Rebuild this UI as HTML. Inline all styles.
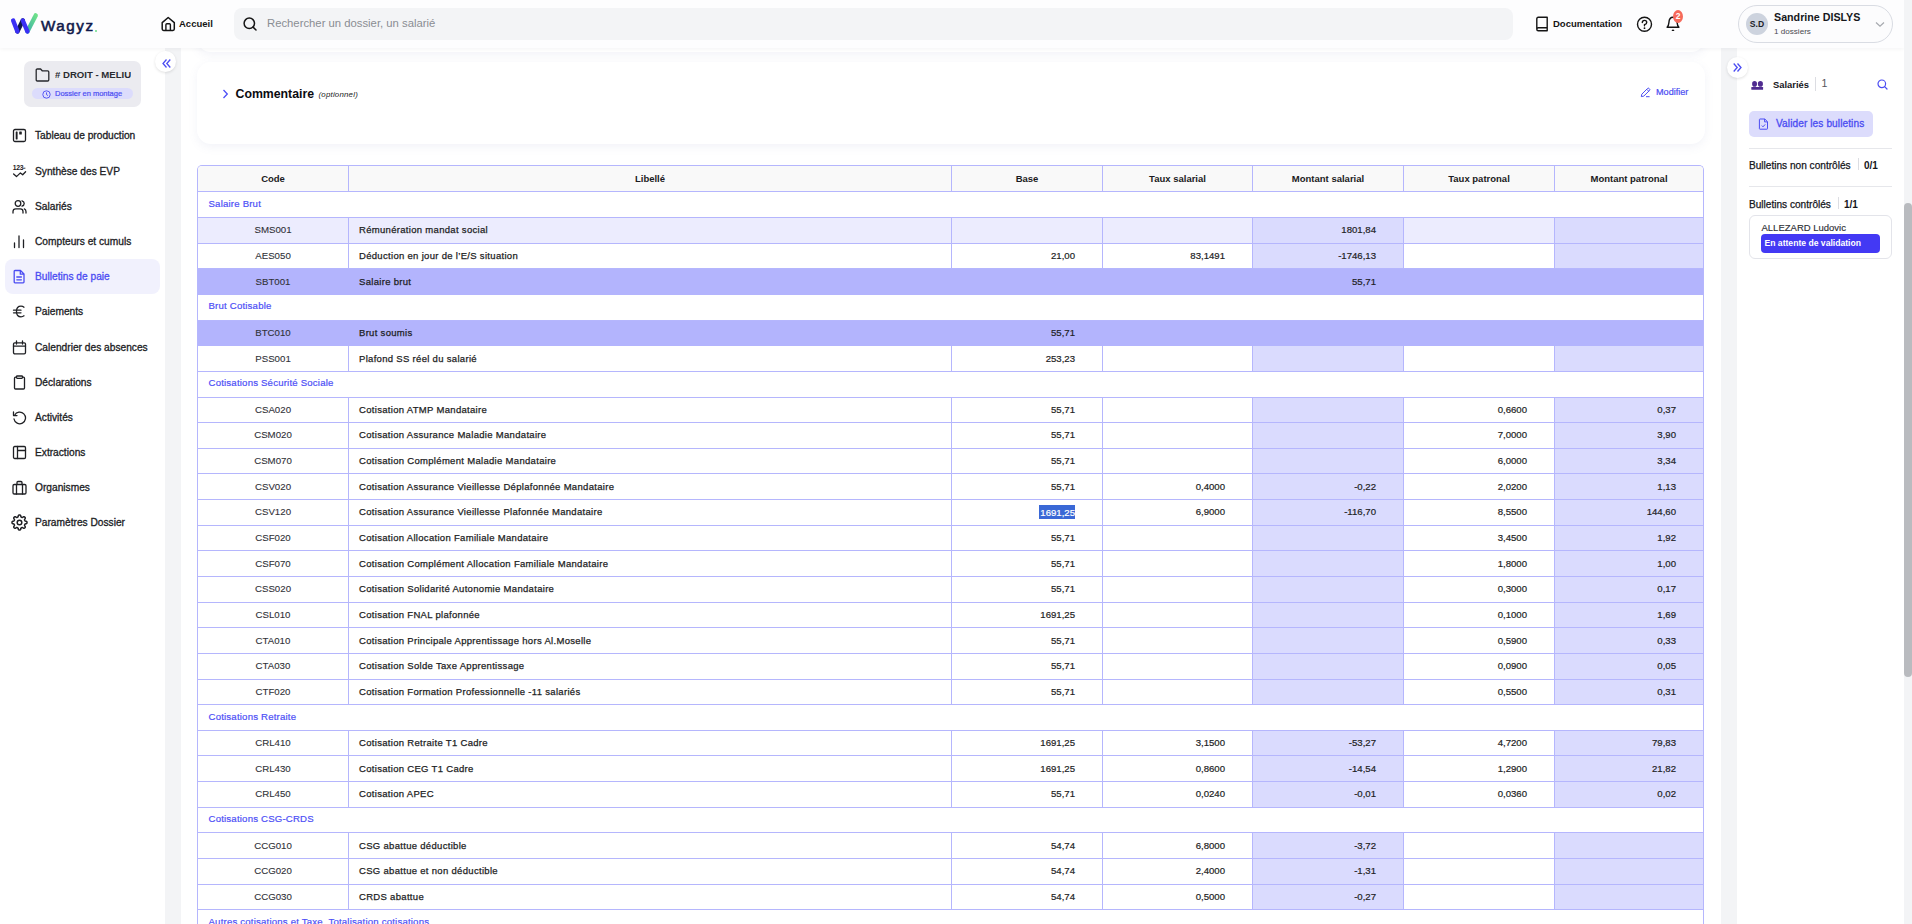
<!DOCTYPE html>
<html lang="fr">
<head>
<meta charset="utf-8">
<title>Wagyz - Bulletins de paie</title>
<style>
*{box-sizing:border-box;margin:0;padding:0}
html,body{width:1912px;height:924px;overflow:hidden}
body{position:relative;background:#fff;font-family:"Liberation Sans",sans-serif;color:#1f2330}
.abs{position:absolute}
svg{display:block}
/* header */
#hdr{position:absolute;left:0;top:0;width:1904px;height:48px;background:#fdfdfe;box-shadow:0 1px 4px rgba(20,20,40,.05);z-index:5}
#track{position:absolute;left:1904px;top:0;width:8px;height:924px;background:#f3f4f6;z-index:6}
#thumb{position:absolute;left:1904px;top:203px;width:8px;height:474px;background:#b9bbbf;border-radius:4px;z-index:7}
.logo-txt{position:absolute;left:41px;top:17px;font-size:15.2px;letter-spacing:1.55px;color:#10194a;-webkit-text-stroke:0.55px #10194a}
.search{position:absolute;left:234px;top:8px;width:1279px;height:32px;background:#f3f4f6;border-radius:8px}
.search span{position:absolute;left:33px;top:9px;font-size:11.3px;color:#8a8d93}
.hb{font-weight:bold;font-size:9.5px;color:#151515}
/* sidebar */
#side{position:absolute;left:0;top:48px;width:165px;height:876px;background:#fff}
#gut{position:absolute;left:165px;top:48px;width:16px;height:876px;background:#f3f4f6}
.folder{position:absolute;left:24px;top:61px;width:117px;height:46px;background:#ebebf0;border-radius:7px;overflow:hidden}
.folder .t{position:absolute;left:31px;top:8px;font-size:9.6px;font-weight:bold;color:#2a2b30;white-space:nowrap;width:76px;overflow:hidden}
.badge{position:absolute;left:8px;top:27px;width:101px;height:11px;border-radius:6px;background:#dcdcfc}
.badge span{position:absolute;left:23px;top:1px;font-size:7.5px;color:#4b4cf2;white-space:nowrap;-webkit-text-stroke:0.2px #4b4cf2}
.nav{position:absolute;left:0;width:165px;height:20px}
.nav span{position:absolute;left:35px;top:5.7px;font-size:10.2px;color:#202124;white-space:nowrap;-webkit-text-stroke:0.3px #202124}
.nav svg{position:absolute;left:12px;top:3.5px}
.nav.act span{color:#4b4cf2;-webkit-text-stroke:0.3px #4b4cf2}
.actbg{position:absolute;left:5px;top:259px;width:155px;height:35px;border-radius:8px;background:#f1f1fd}
.circ{position:absolute;width:21px;height:21px;border-radius:50%;background:#fff;box-shadow:0 1px 3px rgba(0,0,0,.12);z-index:8}
/* content */
#card{position:absolute;left:197px;top:62px;width:1508px;height:82px;background:#fff;border-radius:14px;box-shadow:0 3px 10px rgba(110,120,180,.09)}
#prevcard{position:absolute;left:197px;top:10px;width:1508px;height:42px;background:#fff;border-radius:14px;box-shadow:0 3px 10px rgba(110,120,180,.09)}
/* table */
#tbl{position:absolute;left:197px;top:165px;width:1506px;border-collapse:separate;border-spacing:0;table-layout:fixed;border:1px solid #b5b6fd;border-bottom:none;border-radius:5px 5px 0 0;background:#fff;font-size:9.5px}
#tbl th{height:26.4px;background:#f9f9f9;font-weight:bold;color:#1b1b22;text-align:center;border-bottom:1px solid #b5b6fd;border-right:1px solid #b5b6fd;font-size:9.5px}
#tbl th:last-child{border-right:none}
#tbl th:first-child{border-top-left-radius:4px}
#tbl th:last-child{border-top-right-radius:4px}
#tbl td{height:25.65px;border-bottom:1px solid #b5b6fd;border-right:1px solid #b5b6fd;white-space:nowrap;overflow:hidden;padding:0 0 1px 0}
#tbl td:last-child{border-right:none}
#tbl tr.sec td{color:#4d4ff6;padding-left:10.5px;padding-bottom:3px;font-size:9.6px;letter-spacing:0.2px;background:#fff;-webkit-text-stroke:0.2px #4d4ff6}
#tbl td.c{text-align:center;color:#303137;font-size:9.7px;-webkit-text-stroke:0.1px #303137}
#tbl td.l{padding-left:10px;color:#1d1e24;font-size:9.5px;letter-spacing:0.31px;-webkit-text-stroke:0.25px #1d1e24}
#tbl td.n{text-align:right;padding-right:27px;color:#1d1e24;font-size:9.6px;-webkit-text-stroke:0.2px #1d1e24}
#tbl td.m{background:#dadbfe}
#tbl tr.hl td{background:#ececfe}
#tbl tr.hl td.m{background:#dadbfe}
#tbl tr.tot td{background:#b3b4fd;border-color:#b3b4fd}
.sel{background:#3a68d6;color:#fff;-webkit-text-stroke:0.2px #fff;padding:1.5px 0 1.5px 1px}
/* right panel */
#rgut{position:absolute;left:1721px;top:48px;width:16px;height:876px;background:#f3f4f6}
#rpanel{position:absolute;left:1737px;top:48px;width:167px;height:876px;background:#fff}
.rp-t{position:absolute;white-space:nowrap}
</style>
</head>
<body>
<div id="track"></div>
<div id="thumb"></div>

<!-- HEADER -->
<div id="hdr">
  <svg class="abs" style="left:8px;top:9.3px" width="34" height="28" viewBox="0 0 34 28">
    <defs><linearGradient id="gg" x1="0" y1="1" x2="1" y2="0"><stop offset="0" stop-color="#3bb0a8"/><stop offset="1" stop-color="#6de08a"/></linearGradient></defs>
    <path d="M9.4 22.4 L14.8 11.5" stroke="#0d1850" stroke-width="4.4" stroke-linecap="round"/>
    <path d="M19.4 22.4 L27.7 6.4" stroke="url(#gg)" stroke-width="4.4" stroke-linecap="round"/>
    <path d="M5.15 11.5 L9.4 22.4" stroke="#3a2ff5" stroke-width="4.4" stroke-linecap="round"/>
    <path d="M14.8 11.5 L19.4 22.4" stroke="#3a2ff5" stroke-width="4.4" stroke-linecap="round"/>
  </svg>
  <div class="logo-txt">Wagyz</div>
  <div class="abs" style="left:95px;top:30px;width:2px;height:2px;background:#6ddc8a;border-radius:1px"></div>

  <svg class="abs" style="left:160px;top:16px" width="16" height="16" viewBox="0 0 16 16"><path d="M2.2 6.6 L8.2 1.5 L14.3 6.6 V13 Q14.3 14.4 12.9 14.4 H3.6 Q2.2 14.4 2.2 13 Z" fill="none" stroke="#151515" stroke-width="1.5" stroke-linejoin="round"/><path d="M5.9 14.2 V8.7 Q5.9 7.7 6.9 7.7 H9.4 Q10.4 7.7 10.4 8.7 V14.2" fill="none" stroke="#151515" stroke-width="1.4"/></svg>
  <div class="abs hb" style="left:179px;top:18px">Accueil</div>

  <div class="search">
    <svg class="abs" style="left:9px;top:9px" width="15" height="15" viewBox="0 0 15 15"><circle cx="6.3" cy="6.3" r="5.2" fill="none" stroke="#151515" stroke-width="1.5"/><path d="M10.1 10.1 L13 13" stroke="#151515" stroke-width="1.5" stroke-linecap="round"/></svg>
    <span>Rechercher un dossier, un salarié</span>
  </div>

  <svg class="abs" style="left:1535px;top:16px" width="14" height="16" viewBox="0 0 14 16"><path d="M1.8 13.3 V2.8 Q1.8 1.3 3.3 1.3 H12.2 V14.8 H3.3 Q1.8 14.8 1.8 13.3 Q1.8 11.8 3.3 11.8 H12.2" fill="none" stroke="#151515" stroke-width="1.4" stroke-linejoin="round"/></svg>
  <div class="abs hb" style="left:1553px;top:18px">Documentation</div>
  <svg class="abs" style="left:1635.5px;top:15.8px" width="17" height="17" viewBox="0 0 17 17"><circle cx="8.5" cy="8.3" r="7" fill="none" stroke="#151515" stroke-width="1.4"/><path d="M6.3 6.6 Q6.3 4.4 8.5 4.4 Q10.7 4.4 10.7 6.4 Q10.7 7.8 8.5 8.7 V9.8" fill="none" stroke="#151515" stroke-width="1.4" stroke-linecap="round"/><circle cx="8.5" cy="12.2" r="0.9" fill="#151515"/></svg>
  <svg class="abs" style="left:1664px;top:16px" width="18" height="18" viewBox="0 0 18 18"><path d="M3.1 11.2 Q4.7 9.6 4.9 6.6 Q5.2 1.3 9 1.3 Q12.8 1.3 13.1 6.6 Q13.3 9.6 14.9 11.2 Z" fill="none" stroke="#151515" stroke-width="1.4" stroke-linejoin="round"/><path d="M7.9 13.9 Q9 14.7 10.1 13.9" fill="none" stroke="#151515" stroke-width="1.2"/></svg>
  <div class="abs" style="left:1673px;top:10px;width:10px;height:13px;border-radius:50%;background:#f66a5b;color:#fff;font-size:8.5px;font-weight:bold;text-align:center;line-height:13px">2</div>

  <div class="abs" style="left:1738px;top:5px;width:155px;height:38px;border:1px solid #d9dce3;border-radius:19px;background:#fcfcfd">
    <div class="abs" style="left:7px;top:7px;width:22px;height:22px;border-radius:50%;background:#cdd3de;font-size:8.6px;font-weight:bold;color:#1e2128;text-align:center;line-height:22px">S.D</div>
    <div class="abs" style="left:35px;top:5px;font-size:10.7px;font-weight:bold;color:#16171c;white-space:nowrap">Sandrine DISLYS</div>
    <div class="abs" style="left:35px;top:20.5px;font-size:8.1px;color:#4a4b50;white-space:nowrap">1 dossiers</div>
    <svg class="abs" style="left:136px;top:15px" width="10" height="7" viewBox="0 0 10 7"><path d="M1 1.5 L5 5.2 L9 1.5" fill="none" stroke="#a6a9ae" stroke-width="1.2"/></svg>
  </div>
</div>

<!-- SIDEBAR -->
<div id="side">
</div>
<div id="gut"></div>
<div class="abs" style="left:0;top:0;width:1px;height:1px"></div>
<div class="folder">
  <svg class="abs" style="left:11px;top:7px" width="15" height="14" viewBox="0 0 15 14"><path d="M1.2 2.2 Q1.2 1 2.4 1 H5.6 L7.2 2.8 H12.6 Q13.8 2.8 13.8 4 V11.8 Q13.8 13 12.6 13 H2.4 Q1.2 13 1.2 11.8 Z" fill="none" stroke="#26272c" stroke-width="1.3" stroke-linejoin="round"/></svg>
  <div class="t"># DROIT - MELIUS</div>
  <div class="badge">
    <svg class="abs" style="left:10px;top:1.5px" width="9" height="9" viewBox="0 0 9 9"><circle cx="4.5" cy="4.5" r="3.7" fill="none" stroke="#4b4cf2" stroke-width="0.9"/><path d="M4.5 2.4 V4.6 L6 5.6" fill="none" stroke="#4b4cf2" stroke-width="0.9"/></svg>
    <span>Dossier en montage</span>
  </div>
</div>
<div class="circ" style="left:155px;top:51px">
  <svg class="abs" style="left:6px;top:6.5px" width="11" height="11" viewBox="0 0 11 11"><path d="M5.5 1.5 L2 5.5 L5.5 9.5 M9.3 1.5 L5.8 5.5 L9.3 9.5" fill="none" stroke="#4b4cf2" stroke-width="1.3"/></svg>
</div>

<div class="actbg"></div>
<div class="nav" style="top:124px"><svg width="15" height="15" viewBox="0 0 15 15"><rect x="1.5" y="1.5" width="12" height="12" rx="1.5" fill="none" stroke="#1f2024" stroke-width="1.3" stroke-linecap="round" stroke-linejoin="round"/><rect x="3.7" y="3.6" width="1.9" height="7.9" rx="0.4" fill="#1f2024"/><rect x="7.2" y="3.6" width="2.6" height="2.8" rx="0.5" fill="#1f2024"/></svg><span>Tableau de production</span></div>
<div class="nav" style="top:160px"><svg width="15" height="15" viewBox="0 0 15 15"><text x="0.8" y="5.9" font-size="6.8" letter-spacing="-0.35" font-family="Liberation Sans" font-weight="bold" fill="#1f2024">123</text><path d="M11.2 4.2 H13.4" stroke="#1f2024" stroke-width="0.9"/><path d="M1.6 10 L4.5 12.6 L8.4 8.9 L10.7 10.8 L13.6 7.7" fill="none" stroke="#1f2024" stroke-width="1.3" stroke-linecap="round" stroke-linejoin="round"/></svg><span>Synthèse des EVP</span></div>
<div class="nav" style="top:195px"><svg width="15" height="15" viewBox="0 0 15 15"><circle cx="6" cy="4.5" r="2.8" fill="none" stroke="#1f2024" stroke-width="1.3" stroke-linecap="round" stroke-linejoin="round"/><path d="M1 14 V12.5 Q1 9.8 3.8 9.8 H8.2 Q11 9.8 11 12.5 V14" fill="none" stroke="#1f2024" stroke-width="1.3" stroke-linecap="round" stroke-linejoin="round"/><path d="M10 1.8 Q12.2 2.6 12.2 4.5 Q12.2 6.4 10 7.2 M12.3 9.9 Q14 10.6 14 12.8 V14" fill="none" stroke="#1f2024" stroke-width="1.3" stroke-linecap="round" stroke-linejoin="round"/></svg><span>Salariés</span></div>
<div class="nav" style="top:230px"><svg width="15" height="15" viewBox="0 0 15 15"><path d="M2.5 13.5 V9 M7 13.5 V2 M11.5 13.5 V6" fill="none" stroke="#1f2024" stroke-width="1.3" stroke-linecap="round" stroke-linejoin="round"/></svg><span>Compteurs et cumuls</span></div>
<div class="nav act" style="top:265px"><svg width="15" height="15" viewBox="0 0 15 15"><path d="M3 1.5 H8.5 L12 5 V13 Q12 13.8 11.2 13.8 H3 Q2.2 13.8 2.2 13 V2.3 Q2.2 1.5 3 1.5 Z M8.3 1.5 V5.2 H12 M4.8 8 H9.4 M4.8 10.8 H9.4" fill="none" stroke="#4b4cf2" stroke-width="1.3" stroke-linecap="round" stroke-linejoin="round"/></svg><span>Bulletins de paie</span></div>
<div class="nav" style="top:300px"><svg width="15" height="15" viewBox="0 0 15 15"><path d="M12 3.2 Q10.8 2.2 9 2.2 Q4.5 2.2 4.5 7.5 Q4.5 12.8 9 12.8 Q10.8 12.8 12 11.8 M1.5 6.2 H9 M1.5 8.8 H9" fill="none" stroke="#1f2024" stroke-width="1.3" stroke-linecap="round" stroke-linejoin="round"/></svg><span>Paiements</span></div>
<div class="nav" style="top:336px"><svg width="15" height="15" viewBox="0 0 15 15"><rect x="1.5" y="2.8" width="12" height="11" rx="1.3" fill="none" stroke="#1f2024" stroke-width="1.3" stroke-linecap="round" stroke-linejoin="round"/><path d="M1.5 6.2 H13.5 M4.5 1 V4 M10.5 1 V4" fill="none" stroke="#1f2024" stroke-width="1.3" stroke-linecap="round" stroke-linejoin="round"/></svg><span>Calendrier des absences</span></div>
<div class="nav" style="top:371px"><svg width="15" height="15" viewBox="0 0 15 15"><path d="M4.5 2.2 H3.5 Q2.5 2.2 2.5 3.2 V13 Q2.5 14 3.5 14 H11.5 Q12.5 14 12.5 13 V3.2 Q12.5 2.2 11.5 2.2 H10.5" fill="none" stroke="#1f2024" stroke-width="1.3" stroke-linecap="round" stroke-linejoin="round"/><rect x="4.5" y="1" width="6" height="2.4" rx="0.8" fill="none" stroke="#1f2024" stroke-width="1.3" stroke-linecap="round" stroke-linejoin="round"/></svg><span>Déclarations</span></div>
<div class="nav" style="top:406px"><svg width="15" height="15" viewBox="0 0 15 15"><path d="M2.6 5.2 A5.8 5.8 0 1 1 2 9" fill="none" stroke="#1f2024" stroke-width="1.3" stroke-linecap="round" stroke-linejoin="round"/><path d="M1.5 2 V5.6 H5" fill="none" stroke="#1f2024" stroke-width="1.3" stroke-linecap="round" stroke-linejoin="round"/></svg><span>Activités</span></div>
<div class="nav" style="top:441px"><svg width="15" height="15" viewBox="0 0 15 15"><rect x="1.5" y="1.5" width="12" height="12" rx="1.2" fill="none" stroke="#1f2024" stroke-width="1.3" stroke-linecap="round" stroke-linejoin="round"/><path d="M5.5 1.5 V13.5 M5.5 5.5 H13.5" fill="none" stroke="#1f2024" stroke-width="1.3" stroke-linecap="round" stroke-linejoin="round"/></svg><span>Extractions</span></div>
<div class="nav" style="top:476px"><svg width="15" height="15" viewBox="0 0 15 15"><rect x="1" y="4.5" width="13" height="9.5" rx="1.3" fill="none" stroke="#1f2024" stroke-width="1.3" stroke-linecap="round" stroke-linejoin="round"/><path d="M5 4.5 V2.5 Q5 1.5 6 1.5 H9 Q10 1.5 10 2.5 V4.5 M4.5 4.5 V14 M10.5 4.5 V14" fill="none" stroke="#1f2024" stroke-width="1.3" stroke-linecap="round" stroke-linejoin="round"/></svg><span>Organismes</span></div>
<div class="nav" style="top:511px"><svg width="17" height="17" viewBox="0 0 17 17" style="left:11.2px;top:2.5px"><circle cx="8.5" cy="8.5" r="2.3" fill="none" stroke="#1f2024" stroke-width="1.5" stroke-linejoin="round"/><path d="M8.50 1.00 L8.70 1.01 L8.89 1.03 L9.08 1.07 L9.27 1.15 L9.45 1.29 L9.60 1.53 L9.73 1.88 L9.82 2.28 L9.91 2.62 L10.01 2.87 L10.12 3.02 L10.25 3.13 L10.38 3.20 L10.51 3.27 L10.64 3.33 L10.78 3.38 L10.92 3.43 L11.07 3.47 L11.23 3.48 L11.42 3.45 L11.66 3.35 L11.97 3.16 L12.32 2.95 L12.65 2.79 L12.92 2.73 L13.15 2.76 L13.34 2.84 L13.51 2.94 L13.66 3.06 L13.80 3.20 L13.94 3.34 L14.06 3.49 L14.16 3.66 L14.24 3.85 L14.27 4.08 L14.21 4.35 L14.05 4.68 L13.84 5.03 L13.65 5.34 L13.55 5.58 L13.52 5.77 L13.53 5.93 L13.57 6.08 L13.62 6.22 L13.67 6.36 L13.73 6.49 L13.80 6.62 L13.87 6.75 L13.98 6.88 L14.13 6.99 L14.38 7.09 L14.72 7.18 L15.12 7.27 L15.47 7.40 L15.71 7.55 L15.85 7.73 L15.93 7.92 L15.97 8.11 L15.99 8.30 L16.00 8.50 L15.99 8.70 L15.97 8.89 L15.93 9.08 L15.85 9.27 L15.71 9.45 L15.47 9.60 L15.12 9.73 L14.72 9.82 L14.38 9.91 L14.13 10.01 L13.98 10.12 L13.87 10.25 L13.80 10.38 L13.73 10.51 L13.67 10.64 L13.62 10.78 L13.57 10.92 L13.53 11.07 L13.52 11.23 L13.55 11.42 L13.65 11.66 L13.84 11.97 L14.05 12.32 L14.21 12.65 L14.27 12.92 L14.24 13.15 L14.16 13.34 L14.06 13.51 L13.94 13.66 L13.80 13.80 L13.66 13.94 L13.51 14.06 L13.34 14.16 L13.15 14.24 L12.92 14.27 L12.65 14.21 L12.32 14.05 L11.97 13.84 L11.66 13.65 L11.42 13.55 L11.23 13.52 L11.07 13.53 L10.92 13.57 L10.78 13.62 L10.64 13.67 L10.51 13.73 L10.38 13.80 L10.25 13.87 L10.12 13.98 L10.01 14.13 L9.91 14.38 L9.82 14.72 L9.73 15.12 L9.60 15.47 L9.45 15.71 L9.27 15.85 L9.08 15.93 L8.89 15.97 L8.70 15.99 L8.50 16.00 L8.30 15.99 L8.11 15.97 L7.92 15.93 L7.73 15.85 L7.55 15.71 L7.40 15.47 L7.27 15.12 L7.18 14.72 L7.09 14.38 L6.99 14.13 L6.88 13.98 L6.75 13.87 L6.62 13.80 L6.49 13.73 L6.36 13.67 L6.22 13.62 L6.08 13.57 L5.93 13.53 L5.77 13.52 L5.58 13.55 L5.34 13.65 L5.03 13.84 L4.68 14.05 L4.35 14.21 L4.08 14.27 L3.85 14.24 L3.66 14.16 L3.49 14.06 L3.34 13.94 L3.20 13.80 L3.06 13.66 L2.94 13.51 L2.84 13.34 L2.76 13.15 L2.73 12.92 L2.79 12.65 L2.95 12.32 L3.16 11.97 L3.35 11.66 L3.45 11.42 L3.48 11.23 L3.47 11.07 L3.43 10.92 L3.38 10.78 L3.33 10.64 L3.27 10.51 L3.20 10.38 L3.13 10.25 L3.02 10.12 L2.87 10.01 L2.62 9.91 L2.28 9.82 L1.88 9.73 L1.53 9.60 L1.29 9.45 L1.15 9.27 L1.07 9.08 L1.03 8.89 L1.01 8.70 L1.00 8.50 L1.01 8.30 L1.03 8.11 L1.07 7.92 L1.15 7.73 L1.29 7.55 L1.53 7.40 L1.88 7.27 L2.28 7.18 L2.62 7.09 L2.87 6.99 L3.02 6.88 L3.13 6.75 L3.20 6.62 L3.27 6.49 L3.33 6.36 L3.38 6.22 L3.43 6.08 L3.47 5.93 L3.48 5.77 L3.45 5.58 L3.35 5.34 L3.16 5.03 L2.95 4.68 L2.79 4.35 L2.73 4.08 L2.76 3.85 L2.84 3.66 L2.94 3.49 L3.06 3.34 L3.20 3.20 L3.34 3.06 L3.49 2.94 L3.66 2.84 L3.85 2.76 L4.08 2.73 L4.35 2.79 L4.68 2.95 L5.03 3.16 L5.34 3.35 L5.58 3.45 L5.77 3.48 L5.93 3.47 L6.08 3.43 L6.22 3.38 L6.36 3.33 L6.49 3.27 L6.62 3.20 L6.75 3.13 L6.88 3.02 L6.99 2.87 L7.09 2.62 L7.18 2.28 L7.27 1.88 L7.40 1.53 L7.55 1.29 L7.73 1.15 L7.92 1.07 L8.11 1.03 L8.30 1.01 Z" fill="none" stroke="#1f2024" stroke-width="1.5" stroke-linejoin="round"/></svg><span>Paramètres Dossier</span></div>

<!-- CONTENT -->
<div id="prevcard"></div>

<div id="card">
  <svg class="abs" style="left:25px;top:27px" width="7" height="10" viewBox="0 0 7 10"><path d="M1.5 1 L5.3 5 L1.5 9" fill="none" stroke="#4d4ff6" stroke-width="1.3"/></svg>
  <div class="abs" style="left:38.5px;top:24.5px;font-size:12.3px;font-weight:bold;color:#0b0b10;white-space:nowrap">Commentaire</div>
  <div class="abs" style="left:121.5px;top:27.5px;font-size:7.9px;letter-spacing:0.2px;font-style:italic;color:#222;white-space:nowrap">(optionnel)</div>
  <svg class="abs" style="left:1443px;top:25px" width="11" height="11" viewBox="0 0 11 11"><path d="M1.3 9.6 L1.8 7.2 L7.6 1.4 Q8.3 0.8 9 1.4 L9.6 2 Q10.2 2.7 9.6 3.4 L3.8 9.1 Z M6.8 2.3 L8.7 4.2 M6 9.7 H9.6" fill="none" stroke="#4b4cf2" stroke-width="1"/></svg>
  <div class="abs" style="left:1459px;top:25px;font-size:9.1px;color:#4b4cf2;white-space:nowrap;-webkit-text-stroke:0.2px #4b4cf2">Modifier</div>
</div>

<table id="tbl">
<colgroup><col style="width:151px"><col style="width:603px"><col style="width:151px"><col style="width:150px"><col style="width:151px"><col style="width:151px"><col style="width:148px"></colgroup>
<thead><tr><th>Code</th><th>Libellé</th><th>Base</th><th>Taux salarial</th><th>Montant salarial</th><th>Taux patronal</th><th>Montant patronal</th></tr></thead>
<tbody>
<tr class="sec"><td colspan="7">Salaire Brut</td></tr>
<tr class="hl"><td class="c">SMS001</td><td class="l">Rémunération mandat social</td><td class="n"></td><td class="n"></td><td class="n m">1801,84</td><td class="n"></td><td class="n m"></td></tr>
<tr class=""><td class="c">AES050</td><td class="l">Déduction en jour de l’E/S situation</td><td class="n">21,00</td><td class="n">83,1491</td><td class="n m">-1746,13</td><td class="n"></td><td class="n m"></td></tr>
<tr class="tot"><td class="c">SBT001</td><td class="l">Salaire brut</td><td class="n"></td><td class="n"></td><td class="n m">55,71</td><td class="n"></td><td class="n m"></td></tr>
<tr class="sec"><td colspan="7">Brut Cotisable</td></tr>
<tr class="tot"><td class="c">BTC010</td><td class="l">Brut soumis</td><td class="n">55,71</td><td class="n"></td><td class="n m"></td><td class="n"></td><td class="n m"></td></tr>
<tr class=""><td class="c">PSS001</td><td class="l">Plafond SS réel du salarié</td><td class="n">253,23</td><td class="n"></td><td class="n m"></td><td class="n"></td><td class="n m"></td></tr>
<tr class="sec"><td colspan="7">Cotisations Sécurité Sociale</td></tr>
<tr class=""><td class="c">CSA020</td><td class="l">Cotisation ATMP Mandataire</td><td class="n">55,71</td><td class="n"></td><td class="n m"></td><td class="n">0,6600</td><td class="n m">0,37</td></tr>
<tr class=""><td class="c">CSM020</td><td class="l">Cotisation Assurance Maladie Mandataire</td><td class="n">55,71</td><td class="n"></td><td class="n m"></td><td class="n">7,0000</td><td class="n m">3,90</td></tr>
<tr class=""><td class="c">CSM070</td><td class="l">Cotisation Complément Maladie Mandataire</td><td class="n">55,71</td><td class="n"></td><td class="n m"></td><td class="n">6,0000</td><td class="n m">3,34</td></tr>
<tr class=""><td class="c">CSV020</td><td class="l">Cotisation Assurance Vieillesse Déplafonnée Mandataire</td><td class="n">55,71</td><td class="n">0,4000</td><td class="n m">-0,22</td><td class="n">2,0200</td><td class="n m">1,13</td></tr>
<tr class=""><td class="c">CSV120</td><td class="l">Cotisation Assurance Vieillesse Plafonnée Mandataire</td><td class="n"><span class="sel">1691,25</span></td><td class="n">6,9000</td><td class="n m">-116,70</td><td class="n">8,5500</td><td class="n m">144,60</td></tr>
<tr class=""><td class="c">CSF020</td><td class="l">Cotisation Allocation Familiale Mandataire</td><td class="n">55,71</td><td class="n"></td><td class="n m"></td><td class="n">3,4500</td><td class="n m">1,92</td></tr>
<tr class=""><td class="c">CSF070</td><td class="l">Cotisation Complément Allocation Familiale Mandataire</td><td class="n">55,71</td><td class="n"></td><td class="n m"></td><td class="n">1,8000</td><td class="n m">1,00</td></tr>
<tr class=""><td class="c">CSS020</td><td class="l">Cotisation Solidarité Autonomie Mandataire</td><td class="n">55,71</td><td class="n"></td><td class="n m"></td><td class="n">0,3000</td><td class="n m">0,17</td></tr>
<tr class=""><td class="c">CSL010</td><td class="l">Cotisation FNAL plafonnée</td><td class="n">1691,25</td><td class="n"></td><td class="n m"></td><td class="n">0,1000</td><td class="n m">1,69</td></tr>
<tr class=""><td class="c">CTA010</td><td class="l">Cotisation Principale Apprentissage hors Al.Moselle</td><td class="n">55,71</td><td class="n"></td><td class="n m"></td><td class="n">0,5900</td><td class="n m">0,33</td></tr>
<tr class=""><td class="c">CTA030</td><td class="l">Cotisation Solde Taxe Apprentissage</td><td class="n">55,71</td><td class="n"></td><td class="n m"></td><td class="n">0,0900</td><td class="n m">0,05</td></tr>
<tr class=""><td class="c">CTF020</td><td class="l">Cotisation Formation Professionnelle -11 salariés</td><td class="n">55,71</td><td class="n"></td><td class="n m"></td><td class="n">0,5500</td><td class="n m">0,31</td></tr>
<tr class="sec"><td colspan="7">Cotisations Retraite</td></tr>
<tr class=""><td class="c">CRL410</td><td class="l">Cotisation Retraite T1 Cadre</td><td class="n">1691,25</td><td class="n">3,1500</td><td class="n m">-53,27</td><td class="n">4,7200</td><td class="n m">79,83</td></tr>
<tr class=""><td class="c">CRL430</td><td class="l">Cotisation CEG T1 Cadre</td><td class="n">1691,25</td><td class="n">0,8600</td><td class="n m">-14,54</td><td class="n">1,2900</td><td class="n m">21,82</td></tr>
<tr class=""><td class="c">CRL450</td><td class="l">Cotisation APEC</td><td class="n">55,71</td><td class="n">0,0240</td><td class="n m">-0,01</td><td class="n">0,0360</td><td class="n m">0,02</td></tr>
<tr class="sec"><td colspan="7">Cotisations CSG-CRDS</td></tr>
<tr class=""><td class="c">CCG010</td><td class="l">CSG abattue déductible</td><td class="n">54,74</td><td class="n">6,8000</td><td class="n m">-3,72</td><td class="n"></td><td class="n m"></td></tr>
<tr class=""><td class="c">CCG020</td><td class="l">CSG abattue et non déductible</td><td class="n">54,74</td><td class="n">2,4000</td><td class="n m">-1,31</td><td class="n"></td><td class="n m"></td></tr>
<tr class=""><td class="c">CCG030</td><td class="l">CRDS abattue</td><td class="n">54,74</td><td class="n">0,5000</td><td class="n m">-0,27</td><td class="n"></td><td class="n m"></td></tr>
<tr class="sec"><td colspan="7">Autres cotisations et Taxe, Totalisation cotisations</td></tr>
<tr class=""><td class="c"></td><td class="l"></td><td class="n"></td><td class="n"></td><td class="n m"></td><td class="n"></td><td class="n m"></td></tr>
</tbody>
</table>

<!-- RIGHT PANEL -->
<div id="rgut"></div>
<div id="rpanel"></div>
<div class="circ" style="left:1727px;top:57px">
  <svg class="abs" style="left:5px;top:5px" width="11" height="11" viewBox="0 0 11 11"><path d="M1.7 1.5 L5.2 5.5 L1.7 9.5 M5.5 1.5 L9 5.5 L5.5 9.5" fill="none" stroke="#4b4cf2" stroke-width="1.3"/></svg>
</div>
<svg class="abs" style="left:1751px;top:80px" width="13" height="10" viewBox="0 0 13 10"><ellipse cx="3.55" cy="3.9" rx="2.45" ry="2.8" fill="#4f2b90"/><ellipse cx="9.4" cy="3.9" rx="2.55" ry="2.8" fill="#4f2b90"/><rect x="0.3" y="7" width="11.8" height="2.8" rx="0.5" fill="#4f2b90"/></svg>
<div class="rp-t" style="left:1773px;top:79px;font-size:9.4px;font-weight:bold;color:#15161b">Salariés</div>
<div class="abs" style="left:1815px;top:77px;width:1px;height:14px;background:#dcdde2"></div>
<div class="rp-t" style="left:1821.5px;top:77px;font-size:10.6px;color:#55565c">1</div>
<svg class="abs" style="left:1877px;top:79px" width="11" height="11" viewBox="0 0 11 11"><circle cx="4.8" cy="4.8" r="3.8" fill="none" stroke="#4b4cf2" stroke-width="1.2"/><path d="M7.6 7.6 L10 10" stroke="#4b4cf2" stroke-width="1.2" stroke-linecap="round"/></svg>

<div class="abs" style="left:1749px;top:111px;width:124px;height:26px;border-radius:5px;background:#dcdcfc">
  <svg class="abs" style="left:9px;top:7px" width="11" height="12" viewBox="0 0 11 12"><path d="M2 1 H6.8 L9.5 3.7 V10.6 Q9.5 11.2 8.9 11.2 H2 Q1.4 11.2 1.4 10.6 V1.6 Q1.4 1 2 1 Z M6.6 1 V3.9 H9.5 M3.8 7.6 L5 8.8 L7.2 6.4" fill="none" stroke="#4b4cf2" stroke-width="1"/></svg>
  <div class="rp-t" style="left:27px;top:7px;font-size:10.1px;letter-spacing:0.1px;color:#4b4cf2;-webkit-text-stroke:0.3px #4b4cf2">Valider les bulletins</div>
</div>
<div class="abs" style="left:1749px;top:148px;width:143px;height:1px;background:#e6e7eb"></div>
<div class="rp-t" style="left:1749px;top:160px;font-size:10.1px;color:#15161b;-webkit-text-stroke:0.25px #15161b">Bulletins non contrôlés</div>
<div class="abs" style="left:1858px;top:158px;width:1px;height:12px;background:#dcdde2"></div>
<div class="rp-t" style="left:1864px;top:160px;font-size:10px;font-weight:bold;color:#15161b">0/1</div>
<div class="abs" style="left:1749px;top:186px;width:143px;height:1px;background:#e6e7eb"></div>
<div class="rp-t" style="left:1749px;top:199px;font-size:10.1px;color:#15161b;-webkit-text-stroke:0.25px #15161b">Bulletins contrôlés</div>
<div class="abs" style="left:1838px;top:197px;width:1px;height:12px;background:#dcdde2"></div>
<div class="rp-t" style="left:1844px;top:199px;font-size:10px;font-weight:bold;color:#15161b">1/1</div>
<div class="abs" style="left:1749px;top:215px;width:143px;height:44px;border:1px solid #e3e4ea;border-radius:6px;background:#fff">
  <div class="rp-t" style="left:11.5px;top:6px;font-size:9.5px;color:#2e2f35;-webkit-text-stroke:0.15px #2e2f35">ALLEZARD Ludovic</div>
  <div class="abs" style="left:11px;top:18px;width:119px;height:19px;border-radius:4px;background:#4339f4">
    <div class="rp-t" style="left:3.5px;top:4px;font-size:8.6px;font-weight:bold;color:#fff">En attente de validation</div>
  </div>
</div>
</body>
</html>
